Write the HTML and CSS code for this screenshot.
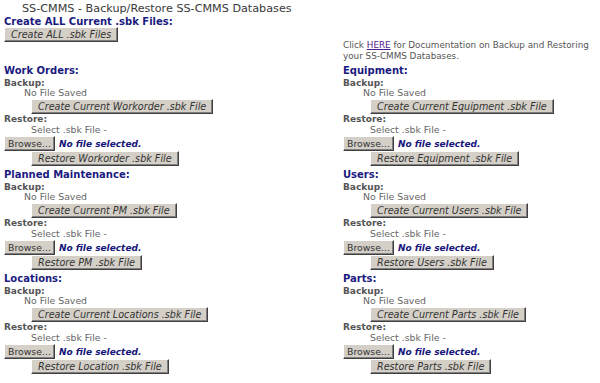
FILE: index.html
```html
<!DOCTYPE html>
<html lang="en">
<head>
  <meta charset="UTF-8" />
  <title>SS-CMMS - Backup/Restore</title>
  <link rel="stylesheet" href="styles.css">
</head>
<body>

  <div class="title">SS-CMMS - Backup/Restore SS-CMMS Databases</div>

  <div class="layout">
    <div class="intro">
      <div class="heading">Create ALL Current .sbk Files:</div>
      <button class="btn">Create ALL .sbk Files</button>
    </div>
    <div class="doc">
      Click <a href="#">HERE</a> for Documentation on Backup and Restoring<br>
      your SS-CMMS Databases.
    </div>

    <div class="section">
      <div class="heading">Work Orders:</div>
      <div class="label">Backup:</div>
      <div class="status">No File Saved</div>
      <div class="action"><button class="btn">Create Current Workorder .sbk File</button></div>
      <div class="label">Restore:</div>
      <div class="pick">Select .sbk File -</div>
      <div class="file-row"><button class="browse">Browse...</button><span class="file-name">No file selected.</span></div>
      <div class="action"><button class="btn">Restore Workorder .sbk File</button></div>
    </div>

    <div class="section">
      <div class="heading">Equipment:</div>
      <div class="label">Backup:</div>
      <div class="status">No File Saved</div>
      <div class="action"><button class="btn">Create Current Equipment .sbk File</button></div>
      <div class="label">Restore:</div>
      <div class="pick">Select .sbk File -</div>
      <div class="file-row"><button class="browse">Browse...</button><span class="file-name">No file selected.</span></div>
      <div class="action"><button class="btn">Restore Equipment .sbk File</button></div>
    </div>

    <div class="section">
      <div class="heading">Planned Maintenance:</div>
      <div class="label">Backup:</div>
      <div class="status">No File Saved</div>
      <div class="action"><button class="btn">Create Current PM .sbk File</button></div>
      <div class="label">Restore:</div>
      <div class="pick">Select .sbk File -</div>
      <div class="file-row"><button class="browse">Browse...</button><span class="file-name">No file selected.</span></div>
      <div class="action"><button class="btn">Restore PM .sbk File</button></div>
    </div>

    <div class="section">
      <div class="heading">Users:</div>
      <div class="label">Backup:</div>
      <div class="status">No File Saved</div>
      <div class="action"><button class="btn">Create Current Users .sbk File</button></div>
      <div class="label">Restore:</div>
      <div class="pick">Select .sbk File -</div>
      <div class="file-row"><button class="browse">Browse...</button><span class="file-name">No file selected.</span></div>
      <div class="action"><button class="btn">Restore Users .sbk File</button></div>
    </div>

    <div class="section">
      <div class="heading">Locations:</div>
      <div class="label">Backup:</div>
      <div class="status">No File Saved</div>
      <div class="action"><button class="btn">Create Current Locations .sbk File</button></div>
      <div class="label">Restore:</div>
      <div class="pick">Select .sbk File -</div>
      <div class="file-row"><button class="browse">Browse...</button><span class="file-name">No file selected.</span></div>
      <div class="action"><button class="btn">Restore Location .sbk File</button></div>
    </div>

    <div class="section">
      <div class="heading">Parts:</div>
      <div class="label">Backup:</div>
      <div class="status">No File Saved</div>
      <div class="action"><button class="btn">Create Current Parts .sbk File</button></div>
      <div class="label">Restore:</div>
      <div class="pick">Select .sbk File -</div>
      <div class="file-row"><button class="browse">Browse...</button><span class="file-name">No file selected.</span></div>
      <div class="action"><button class="btn">Restore Parts .sbk File</button></div>
    </div>
  </div>

</body>
</html>
```

FILE: styles.css
```css
body {
  margin: 0;
  padding: 2px 0 0 4px;
  background: #fff;
  font-family: 'DejaVu Sans', Verdana, sans-serif;
  color: #555;
}

.title {
  font-size: 11.2px;
  line-height: 13px;
  color: #3a3a3a;
  padding-left: 18px;
}

.layout {
  display: grid;
  grid-template-columns: 339px 1fr;
}

.intro {
  padding-top: 1px;
  padding-bottom: 19px;
}

.doc {
  align-self: end;
  padding-bottom: 3px;
  font-size: 8.8px;
  line-height: 11px;
  color: #555;
  white-space: nowrap;
}

.doc a {
  color: #551a8b;
}

.heading {
  font-size: 10px;
  line-height: 11px;
  font-weight: bold;
  color: #1b1b7f;
}

.section .heading {
  line-height: 12px;
  margin-bottom: 1px;
}

.section {
  padding-bottom: 3px;
}

.label {
  font-size: 9px;
  line-height: 10px;
  font-weight: bold;
  color: #555;
}

.status {
  font-size: 9.33px;
  line-height: 10px;
  color: #666;
  padding-left: 20px;
}

.pick {
  font-size: 9.33px;
  line-height: 10px;
  color: #666;
  padding-left: 27px;
  margin-top: 1px;
}

.action {
  padding-left: 27px;
  height: 15px;
}

.status + .action {
  margin-top: 1px;
}

.btn,
.browse {
  display: inline-block;
  vertical-align: top;
  margin: 0;
  font-family: 'DejaVu Sans', Verdana, sans-serif;
  font-size: 9.65px;
  line-height: 11px;
  height: 15px;
  padding: 1px 6px;
  color: #333;
  background: #d4d0c8;
  border: 1px solid;
  border-color: #fff #404040 #404040 #fff;
  box-shadow: inset -1px -1px #808080;
  border-radius: 0;
  cursor: pointer;
}

.btn {
  font-style: italic;
}

.browse {
  font-size: 9.33px;
  padding: 1px 3px;
}

.file-row {
  display: flex;
  align-items: center;
  gap: 4px;
  margin-top: 1px;
  height: 15px;
}

.file-name {
  font-size: 9px;
  font-weight: bold;
  font-style: italic;
  color: #16167a;
}
```
